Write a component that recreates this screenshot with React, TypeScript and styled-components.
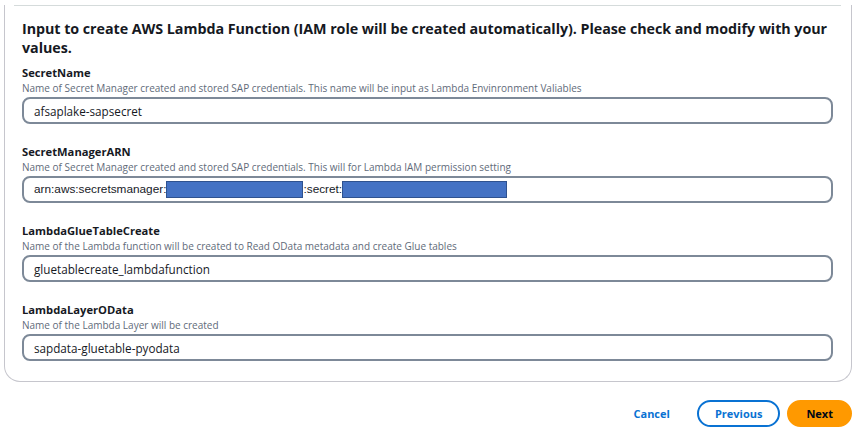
import React from 'react';
import styled, { createGlobalStyle } from 'styled-components';

const GlobalStyle = createGlobalStyle`
  body {
    margin: 0;
    background: #ffffff;
    font-family: "Open Sans", "Noto Sans", Arial, sans-serif;
    color: #16191f;
  }
`;

const Page = styled.div`
  width: 858px;
  height: 430px;
  padding: 0 6px 0 4px;
  box-sizing: border-box;
  overflow: hidden;
`;

const Card = styled.section`
  border: 1px solid #c6c6cd;
  border-top: none;
  border-radius: 0 0 16px 16px;
  padding: 0 18px 0 17px;
  box-sizing: border-box;
`;

const Divider = styled.div`
  height: 1px;
  background: #d5dbdb;
  margin: 5px -8px 0 -8px;
`;

const Heading = styled.h2`
  margin: 13px 0 8px;
  font-size: 14.3px;
  line-height: 19px;
  font-weight: 700;
  letter-spacing: -0.05px;
`;

const Field = styled.div`
  display: flex;
  flex-direction: column;
  margin-bottom: 20px;
`;

const Label = styled.label`
  font-size: 11.2px;
  font-weight: 700;
  line-height: 16px;
`;

const Description = styled.span`
  font-size: 10px;
  line-height: 14px;
  color: #5f6b7a;
  margin-bottom: 2px;
`;

const InputBox = styled.div`
  display: flex;
  align-items: center;
  height: 27px;
  border: 2px solid #7d8998;
  border-radius: 8px;
  padding: 0 10px;
  box-sizing: border-box;
  font-size: 11.7px;
  color: #16191f;
`;

const ArnText = styled.span`
  font-family: "Liberation Sans", Arial, sans-serif;
  font-size: 11.8px;
`;

const Redacted = styled.span<{ $w: number }>`
  display: inline-block;
  width: ${p => p.$w}px;
  height: 17px;
  background: #4472c4;
  border: 1px solid #2f528f;
  box-sizing: border-box;
  vertical-align: middle;
`;

const Actions = styled.div`
  display: flex;
  justify-content: flex-end;
  align-items: center;
  gap: 7px;
  margin-top: 18px;
`;

const Button = styled.button<{ $variant: 'link' | 'normal' | 'primary' }>`
  font-family: "Open Sans", "Noto Sans", Arial, sans-serif;
  font-size: 11px;
  font-weight: 700;
  height: 27px;
  border-radius: 14px;
  padding: 0 ${p => (p.$variant === 'link' ? '18px' : p.$variant === 'normal' ? '16px' : '17px')};
  box-sizing: border-box;
  cursor: pointer;
  border: 2px solid ${p => (p.$variant === 'normal' ? '#0972d3' : p.$variant === 'primary' ? '#ff9900' : 'transparent')};
  background: ${p => (p.$variant === 'primary' ? '#ff9900' : '#ffffff')};
  color: ${p => (p.$variant === 'primary' ? '#000716' : '#0972d3')};
`;

const fields = [
  {
    name: 'SecretName',
    desc: 'Name of Secret Manager created and stored SAP credentials. This name will be input as Lambda Envinronment Valiables',
    value: 'afsaplake-sapsecret',
  },
  {
    name: 'SecretManagerARN',
    desc: 'Name of Secret Manager created and stored SAP credentials. This will for Lambda IAM permission setting',
    value: null,
  },
  {
    name: 'LambdaGlueTableCreate',
    desc: 'Name of the Lambda function will be created to Read OData metadata and create Glue tables',
    value: 'gluetablecreate_lambdafunction',
  },
  {
    name: 'LambdaLayerOData',
    desc: 'Name of the Lambda Layer will be created',
    value: 'sapdata-gluetable-pyodata',
  },
];

const App: React.FC = () => {
  return (
    <Page>
      <GlobalStyle />
      <Card>
        <Divider />
        <Heading>
          Input to create AWS Lambda Function (IAM role will be created automatically). Please check and modify with your values.
        </Heading>
        {fields.map(f => (
          <Field key={f.name}>
            <Label>{f.name}</Label>
            <Description>{f.desc}</Description>
            <InputBox>
              {f.value ?? (
                <ArnText>
                  arn:aws:secretsmanager:<Redacted $w={137} />:secret:<Redacted $w={165} />
                </ArnText>
              )}
            </InputBox>
          </Field>
        ))}
      </Card>
      <Actions>
        <Button $variant="link">Cancel</Button>
        <Button $variant="normal">Previous</Button>
        <Button $variant="primary">Next</Button>
      </Actions>
    </Page>
  );
};

export default App;
